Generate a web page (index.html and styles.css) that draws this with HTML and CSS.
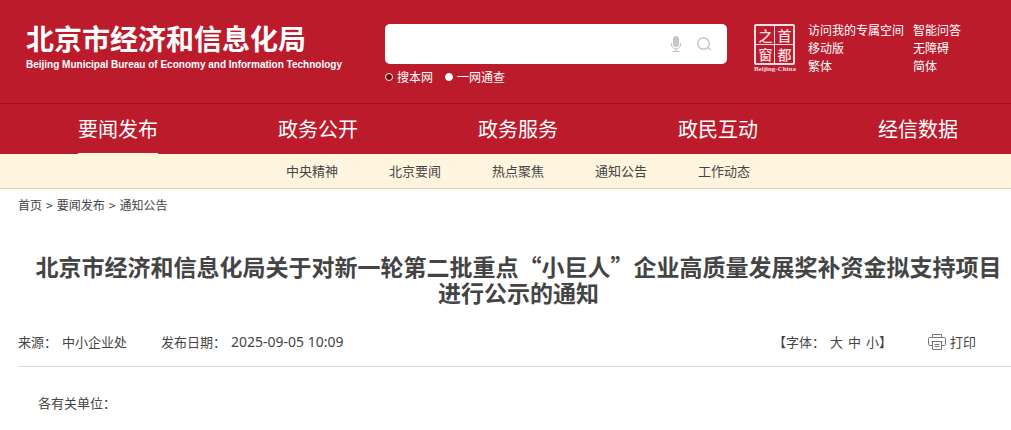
FILE: index.html
```html
<!DOCTYPE html>
<html lang="zh-CN">

<head>
    <meta charset="UTF-8">
    <meta name="viewport" content="width=device-width, initial-scale=1.0">
    <title>北京市经济和信息化局</title>
    <link rel="stylesheet" href="styles.css">
</head>

<body>
    <header class="header">
        <a class="logo" href="#">
            <span class="logo-cn">北京市经济和信息化局</span>
            <span class="logo-en">Beijing Municipal Bureau of Economy and Information Technology</span>
        </a>

        <form class="search">
            <div class="search-box">
                <input class="search-input" type="text" aria-label="搜索">
                <button class="icon-btn" type="button" aria-label="语音">
                    <svg width="12" height="18" viewBox="0 0 12 18" fill="none" stroke="#bdbdbd">
                        <rect x="3.5" y="1.5" width="5" height="10" rx="2.5" fill="#c8c8c8" />
                        <path d="M1.5 8v1.5a4.5 4.5 0 0 0 9 0V8M6 14v2.5M2.5 16.5h7" />
                    </svg>
                </button>
                <button class="icon-btn" type="submit" aria-label="搜索">
                    <svg width="16" height="16" viewBox="0 0 16 16" fill="none" stroke="#c4c4c4" stroke-width="1.4">
                        <circle cx="7.5" cy="7.5" r="5.8" />
                        <path d="M11.2 12h1.2l2.2 1.8" />
                    </svg>
                </button>
            </div>
            <div class="scope">
                <label><input type="radio" name="scope" checked>搜本网</label>
                <label><input type="radio" name="scope">一网通查</label>
            </div>
        </form>

        <div class="tools">
            <a class="seal" href="#">
                <span class="seal-grid">
                    <span>之</span><span>首</span>
                    <span>窗</span><span>都</span>
                </span>
                <span class="seal-en">Beijing-China</span>
            </a>
            <div class="links">
                <a href="#">访问我的专属空间</a>
                <a href="#">智能问答</a>
                <a href="#">移动版</a>
                <a href="#">无障碍</a>
                <a href="#">繁体</a>
                <a href="#">简体</a>
            </div>
        </div>
    </header>

    <nav class="nav">
        <a class="active" href="#">要闻发布</a>
        <a href="#">政务公开</a>
        <a href="#">政务服务</a>
        <a href="#">政民互动</a>
        <a href="#">经信数据</a>
    </nav>
    <nav class="subnav">
        <a href="#">中央精神</a>
        <a href="#">北京要闻</a>
        <a href="#">热点聚焦</a>
        <a href="#">通知公告</a>
        <a href="#">工作动态</a>
    </nav>

    <main class="main">
        <div class="crumbs">
            <a href="#">首页</a>
            <span>&gt;</span>
            <a href="#">要闻发布</a>
            <span>&gt;</span>
            <a href="#">通知公告</a>
        </div>
        <h1 class="title">北京市经济和信息化局关于对新一轮第二批重点“小巨人”企业高质量发展奖补资金拟支持项目进行公示的通知</h1>

        <div class="meta">
            <span class="source">来源： <span>中小企业处</span></span>
            <span class="source">发布日期： <time class="date">2025-09-05 10:09</time></span>
            <div class="font-size">
                <span>【字体：</span>
                <button type="button">大</button>
                <button type="button">中</button>
                <span><button type="button">小</button>】</span>
            </div>
            <button class="print" type="button">
                <svg width="18" height="18" viewBox="0 0 18 18" fill="none" stroke="#777">
                    <path d="M4.5 4.5v-3h9v3M4.5 12.5h-3a1 1 0 0 1-1-1v-6a1 1 0 0 1 1-1h15a1 1 0 0 1 1 1v6a1 1 0 0 1-1 1h-3" />
                    <path d="M3.5 8.5h11M4.5 8.5v8h9v-8M6.5 11.5h5M6.5 13.5h5" />
                </svg>
                打印
            </button>
        </div>

        <article class="content">
            <p>各有关单位：</p>
        </article>
    </main>
</body>

</html>
```

FILE: styles.css
```css
* {
    box-sizing: border-box;
}

body {
    margin: 0;
    font-family: "Noto Sans CJK SC", sans-serif;
    font-size: 13px;
    color: #444;
    background-color: #fff;
}

a {
    color: inherit;
    text-decoration: none;
}

button {
    padding: 0;
    border: none;
    background: none;
    font: inherit;
    color: inherit;
}

/* Header */
.header {
    display: flex;
    align-items: flex-start;
    height: 104px;
    padding: 24px 50px 0 26px;
    color: #fff;
    background-color: #bc1b2c;
    border-bottom: 1px solid #a01020;
}

.logo {
    display: flex;
    flex-direction: column;
    gap: 5px;
    width: 359px;
    white-space: nowrap;
}

.logo-cn {
    font-size: 28px;
    font-weight: bold;
    line-height: 28px;
}

.logo-en {
    font-family: "Liberation Sans", sans-serif;
    font-size: 10px;
    font-weight: bold;
    line-height: 16px;
}

.search {
    flex: 1;
}

.search-box {
    display: flex;
    align-items: center;
    gap: 14px;
    height: 40px;
    padding-right: 15px;
    background-color: #fff;
    border-radius: 5px;
}

.search-input {
    flex: 1;
    min-width: 0;
    height: 40px;
    padding: 0 12px;
    border: none;
    outline: none;
    background: none;
}

.icon-btn {
    display: flex;
}

.scope {
    display: flex;
    gap: 12px;
    margin-top: 4px;
    font-size: 12px;
    line-height: 18px;
}

.scope label {
    display: flex;
    align-items: center;
    gap: 4px;
}

.scope input {
    appearance: none;
    width: 8px;
    height: 8px;
    margin: 0;
    border: 1px solid #fff;
    border-radius: 50%;
    background-color: #fff;
}

.scope input:checked {
    background-color: #7a0000;
}

.tools {
    display: flex;
    gap: 11px;
    margin-left: 26px;
}

.seal {
    display: flex;
    flex-direction: column;
    align-items: center;
    width: 44px;
}

.seal-grid {
    display: grid;
    grid-template-columns: 1fr 1fr;
    gap: 1px;
    padding: 2px;
    background-color: #f9dfe1;
    border-radius: 2px;
}

.seal-grid span {
    width: 18px;
    font-family: "Noto Sans CJK SC", sans-serif;
    font-size: 14px;
    font-weight: 500;
    line-height: 18px;
    text-align: center;
    color: #f9dfe1;
    background-color: #bc1b2c;
}

.seal-en {
    font-family: "Liberation Serif", serif;
    font-size: 7px;
    font-weight: bold;
    line-height: 8px;
    color: #f9dfe1;
}

.links {
    display: grid;
    grid-template-columns: auto auto;
    column-gap: 9px;
    margin-top: -3px;
    font-size: 12px;
    line-height: 18px;
    white-space: nowrap;
}

/* Navigation */
.nav {
    display: flex;
    justify-content: space-between;
    padding: 0 53px 0 78px;
    font-size: 20px;
    line-height: 49px;
    color: #fff;
    background-color: #bc1b2c;
}

.nav a {
    border-bottom: 1px solid transparent;
}

.nav .active {
    border-color: #fff5df;
}

.subnav {
    display: flex;
    gap: 51px;
    padding-left: 286px;
    line-height: 34px;
    background-color: #fff5df;
    border-bottom: 1px solid #dccfae;
}

/* Article */
.main {
    padding-left: 18px;
}

.crumbs {
    display: flex;
    gap: 4px;
    font-size: 12px;
    line-height: 32px;
}

.title {
    margin: 32px 0 18px;
    padding-left: 8px;
    font-size: 23px;
    line-height: 26px;
    text-align: center;
}

.meta {
    display: flex;
    align-items: center;
    height: 44px;
    padding-right: 35px;
    padding-bottom: 6px;
    border-bottom: 1px solid #d8d8d8;
}

.source {
    display: flex;
    align-items: center;
    gap: 5px;
    margin-right: 34px;
}

.date {
    font-family: "Noto Sans", sans-serif;
    font-size: 14px;
}

.font-size {
    display: flex;
    gap: 5px;
    margin-left: auto;
}

.print {
    display: flex;
    align-items: center;
    gap: 4px;
    margin-left: 36px;
}

.content {
    padding: 26px 20px 0;
}

.content p {
    margin: 0;
    line-height: 20px;
}
```
